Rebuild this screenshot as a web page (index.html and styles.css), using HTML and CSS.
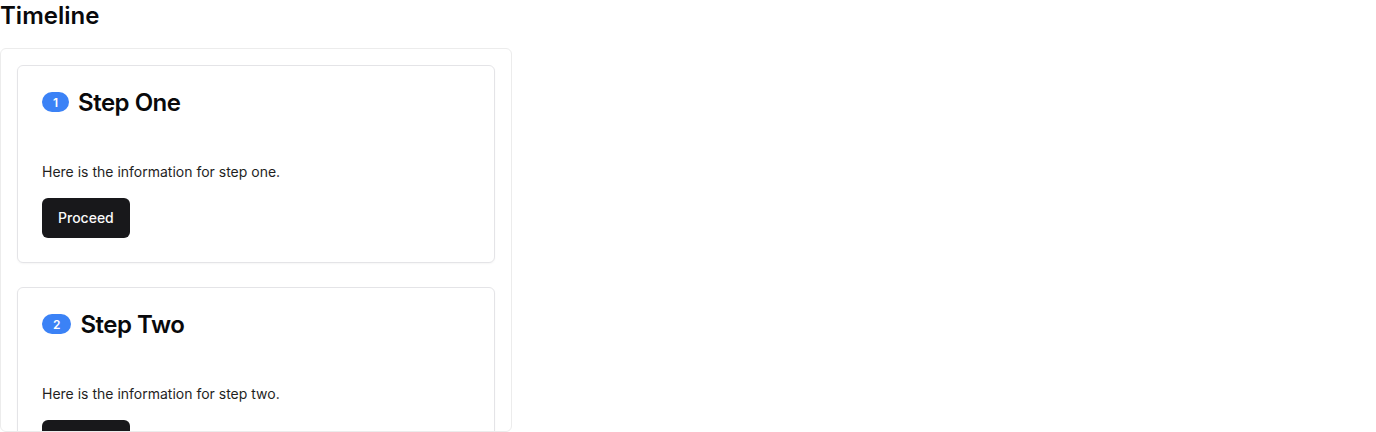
FILE: index.html
```html
<!DOCTYPE html>
<html>
<head>
<meta charset="utf-8">
<link rel="stylesheet" href="styles.css">
</head>
<body>
<h2 class="page-title">Timeline</h2>
<div class="timeline">
  <div class="card">
    <div class="card-header">
      <span class="badge">1</span>
      <h3 class="card-title">Step One</h3>
    </div>
    <div class="card-content">
      <p class="card-text">Here is the information for step one.</p>
      <button class="btn">Proceed</button>
    </div>
  </div>
  <div class="card">
    <div class="card-header">
      <span class="badge">2</span>
      <h3 class="card-title">Step Two</h3>
    </div>
    <div class="card-content">
      <p class="card-text">Here is the information for step two.</p>
      <button class="btn">Proceed</button>
    </div>
  </div>
</div>
</body>
</html>
```
FILE: styles.css
```css
* { box-sizing: border-box; }
html, body { margin: 0; padding: 0; background: #fff; }
body {
  font-family: Inter, "Noto Sans", sans-serif;
  color: #09090b;
}
.page-title {
  margin: 0 0 16px 0;
  font-size: 24px;
  line-height: 32px;
  font-weight: 600;
}
.timeline {
  width: 512px;
  height: 384px;
  overflow: hidden;
  border: 1px solid #ececec;
  border-radius: 6px;
  padding: 16px;
  display: flex;
  flex-direction: column;
  gap: 24px;
}
.card {
  flex: none;
  border: 1px solid #e4e4e7;
  border-radius: 6px;
  background: #fff;
  box-shadow: 0 1px 2px rgba(0,0,0,0.04);
}
.card-header {
  display: flex;
  align-items: flex-start;
  padding: 21px 24px 0 24px;
  height: 96px;
}
.badge {
  display: inline-flex;
  align-items: center;
  justify-content: center;
  height: 20px;
  padding: 0 11px;
  margin-top: 5px;
  border-radius: 999px;
  background: #3b82f6;
  color: #fff;
  font-size: 12px;
  font-weight: 600;
}
.card-title {
  margin: 0 0 0 9px;
  font-size: 24px;
  line-height: 32px;
  font-weight: 600;
  letter-spacing: -0.5px;
}
.card-content {
  padding: 0 24px 24px 24px;
}
.card-text {
  margin: 0 0 16px 0;
  font-size: 14px;
  line-height: 20px;
  color: #1f1f1f;
}
.btn {
  height: 40px;
  padding: 0 16px 1px 16px;
  border: none;
  border-radius: 6px;
  background: #18181b;
  color: #fafafa;
  font-family: Inter, sans-serif;
  font-size: 14px;
  font-weight: 500;
}
```
